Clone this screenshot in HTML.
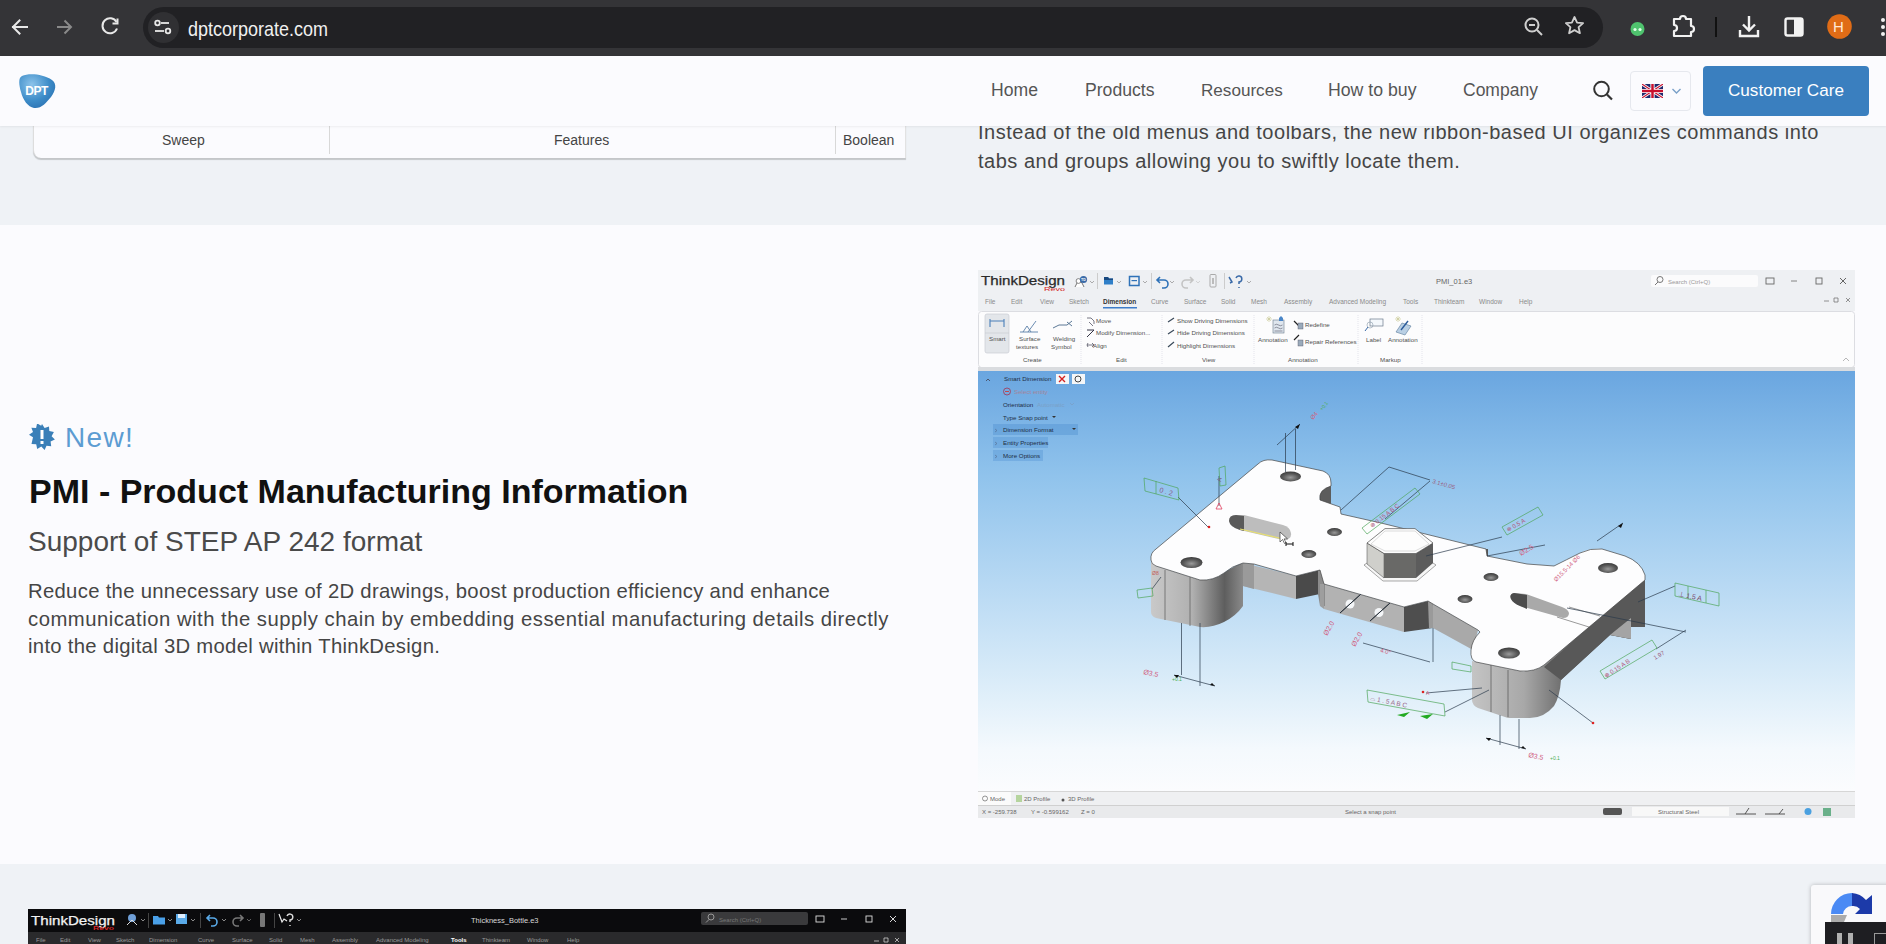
<!DOCTYPE html>
<html><head><meta charset="utf-8">
<style>
*{margin:0;padding:0;box-sizing:border-box}
html,body{width:1886px;height:944px;overflow:hidden;background:#fbfbfe;font-family:"Liberation Sans",sans-serif}
.a{position:absolute}
.t{position:absolute;white-space:nowrap;line-height:1}
</style></head><body>
<!-- Browser chrome -->
<div class="a" style="left:0;top:0;width:1886px;height:56px;background:#343437"></div>
<div class="a" style="left:143px;top:7px;width:1460px;height:41px;border-radius:21px;background:#212124"></div>
<div class="a" style="left:148px;top:12px;width:31px;height:31px;border-radius:50%;background:#303033"></div>
<svg class="a" style="left:0;top:0" width="1886" height="56">
<g fill="none" stroke="#e8e8e8" stroke-width="2" stroke-linecap="square">
<path d="M27 27H13M19.5 20.5L13 27l6.5 6.5"/>
</g>
<g fill="none" stroke="#8a8a8a" stroke-width="2">
<path d="M57 27h14M64.5 20.5L71 27l-6.5 6.5"/>
</g>
<g fill="none" stroke="#e8e8e8" stroke-width="2">
<path d="M116.5 22A7.5 7.5 0 1 0 117 28.5"/>
<path d="M117.5 18.5v5h-5" stroke-width="2"/>
</g>
<g fill="none" stroke="#e8e8e8" stroke-width="1.8">
<circle cx="157.5" cy="23" r="2.3"/><path d="M161 23h8"/>
<circle cx="168" cy="31" r="2.3"/><path d="M155 31h9"/>
</g>
<g fill="none" stroke="#cfcfcf" stroke-width="2">
<circle cx="1532" cy="25" r="6.5"/><path d="M1537 30l5 5"/><path d="M1529 25h6"/>
</g>
<path d="M1574.5 17l2.6 5.6 6 .6-4.5 4 1.3 6-5.4-3.1-5.4 3.1 1.3-6-4.5-4 6-.6z" fill="none" stroke="#cfcfcf" stroke-width="1.8" stroke-linejoin="round"/>
<circle cx="1637.5" cy="29" r="7" fill="#4fc36e"/>
<circle cx="1635" cy="29.5" r="1.6" fill="#e0ffe8"/><circle cx="1640" cy="29.5" r="1.6" fill="#e0ffe8"/>
<path d="M1674 19h6a3 3 0 0 1 6 0h5v7a3 3 0 0 1 0 6v4h-17v-5a3 3 0 0 0 0-6z" fill="none" stroke="#f2f2f2" stroke-width="2.2" stroke-linejoin="round"/>
<rect x="1715" y="17" width="2" height="20" fill="#111"/>
<g fill="none" stroke="#f2f2f2" stroke-width="2.4">
<path d="M1749 16v14M1743 24.5l6 6 6-6M1740 30v6h18v-6"/>
</g>
<rect x="1785.5" y="18.5" width="17" height="17" rx="2" fill="none" stroke="#f2f2f2" stroke-width="2.4"/>
<rect x="1794" y="18" width="9" height="18" fill="#f2f2f2"/>
<circle cx="1839.5" cy="26.5" r="12.3" fill="#e06c16"/>
<circle cx="1883" cy="20" r="2" fill="#f0f0f0"/><circle cx="1883" cy="27" r="2" fill="#f0f0f0"/><circle cx="1883" cy="34" r="2" fill="#f0f0f0"/>
</svg>
<div class="t" style="left:1833px;top:19px;font-size:15px;color:#ffe9d6">H</div>
<div class="t" style="left:188px;top:19px;font-size:18px;color:#f0f0f0;transform:scaleY(1.1);transform-origin:0 0">dptcorporate.com</div>

<!-- Header -->
<div class="a" style="left:0;top:56px;width:1886px;height:70px;background:#fbfbfe;z-index:5;box-shadow:0 1px 2px rgba(0,0,0,0.06)">
<svg class="a" style="left:17px;top:16px" width="40" height="38" viewBox="0 0 40 38">
<defs><radialGradient id="lg" cx="0.35" cy="0.3" r="0.8"><stop offset="0" stop-color="#8cc3ea"/><stop offset="0.6" stop-color="#3d8cc8"/><stop offset="1" stop-color="#2a6fb0"/></radialGradient></defs>
<path d="M5 4C12 1 26 2 35 8C40 12 39 18 34 25C29 31 24 37 17 36C11 35 6 28 4 20C2 13 1 6 5 4z" fill="url(#lg)"/>
<text x="19.5" y="23" font-family="Liberation Sans" font-weight="bold" font-size="12" fill="#fff" text-anchor="middle" letter-spacing="-0.5">DPT</text>
</svg>
<div class="t" style="left:991px;top:26px;font-size:17.6px;color:#555">Home</div>
<div class="t" style="left:1085px;top:26px;font-size:17.6px;color:#555">Products</div>
<div class="t" style="left:1201px;top:26px;font-size:17.1px;color:#555">Resources</div>
<div class="t" style="left:1328px;top:26px;font-size:17.7px;color:#555">How to buy</div>
<div class="t" style="left:1463px;top:26px;font-size:17.5px;color:#555">Company</div>
<svg class="a" style="left:1590px;top:22px" width="26" height="26"><circle cx="11.5" cy="11" r="7.3" fill="none" stroke="#333" stroke-width="2"/><path d="M17 16.5l5 5" stroke="#333" stroke-width="2.2"/></svg>
<div class="a" style="left:1630px;top:15px;width:61px;height:40px;border:1px solid #e6e8ee;border-radius:4px"></div>
<svg class="a" style="left:1642px;top:28px" width="21" height="14" viewBox="0 0 60 40">
<rect width="60" height="40" fill="#1f2a6e"/>
<path d="M0 0L60 40M60 0L0 40" stroke="#fff" stroke-width="8"/>
<path d="M0 0L60 40M60 0L0 40" stroke="#c8102e" stroke-width="3"/>
<path d="M30 0v40M0 20h60" stroke="#fff" stroke-width="12"/>
<path d="M30 0v40M0 20h60" stroke="#c8102e" stroke-width="7"/>
</svg>
<svg class="a" style="left:1671px;top:30px" width="12" height="10"><path d="M1.5 3l4 4 4-4" fill="none" stroke="#7aa0c8" stroke-width="1.4"/></svg>
<div class="a" style="left:1703px;top:10px;width:166px;height:50px;background:#3a7fbf;border-radius:4px"></div>
<div class="t" style="left:1728px;top:26px;font-size:17.1px;color:#fff">Customer Care</div>
</div>

<!-- top band -->
<div class="a" style="left:0;top:126px;width:1886px;height:99px;background:#eff2f6">
<div class="a" style="left:33px;top:-2px;width:873px;height:34px;background:#fbfbfe;border-radius:0 0 0 8px;box-shadow:0 2px 1px rgba(0,0,0,0.18);border-left:1px solid #ddd;border-right:1px solid #e2e2e2"></div>
<div class="a" style="left:329px;top:0;width:1px;height:28px;background:#d8d8d8"></div>
<div class="a" style="left:835px;top:0;width:1px;height:28px;background:#d8d8d8"></div>
<div class="t" style="left:162px;top:7px;font-size:14px;color:#444">Sweep</div>
<div class="t" style="left:554px;top:7px;font-size:14px;color:#444">Features</div>
<div class="t" style="left:843px;top:7px;font-size:14px;color:#444">Boolean</div>
<div class="t" style="left:978px;top:-4px;font-size:20px;color:#454545;letter-spacing:0.51px">Instead of the old menus and toolbars, the new ribbon-based UI organizes commands into</div>
<div class="t" style="left:978px;top:25px;font-size:20px;color:#454545;letter-spacing:0.51px">tabs and groups allowing you to swiftly locate them.</div>
</div>

<!-- PMI text -->
<svg class="a" style="left:29px;top:424px" width="26" height="26" viewBox="0 0 26 26">
<path d="M13 0l2.6 4 4.4-1.6.3 4.7 4.6 1-2.3 4.1 3.3 3.3-4.3 2 .6 4.7-4.7-.5-1.9 4.3-3.3-3.4-4.1 2.3-1-4.6-4.7-.3L4 13.3 0 10.7l4-2.6L2.4 3.7l4.7.3 1-4.6 4.1 2.3z" fill="#3a7fb8"/>
<rect x="11.5" y="6" width="3" height="9" fill="#fff"/><rect x="11.5" y="17" width="3" height="3" fill="#fff"/>
</svg>
<div class="t" style="left:65px;top:424px;font-size:28px;color:#5c9cd2;letter-spacing:1.3px">New!</div>
<div class="t" style="left:29px;top:474px;font-size:34px;color:#111;font-weight:bold;letter-spacing:0px">PMI - Product Manufacturing Information</div>
<div class="t" style="left:28px;top:528px;font-size:28px;color:#4a4a4a;letter-spacing:0px">Support of STEP AP 242 format</div>
<div class="t" style="left:28px;top:581px;font-size:20.3px;color:#454545;letter-spacing:0.3px">Reduce the unnecessary use of 2D drawings, boost production efficiency and enhance</div>
<div class="t" style="left:28px;top:608.5px;font-size:20.3px;color:#454545;letter-spacing:0.49px">communication with the supply chain by embedding essential manufacturing details directly</div>
<div class="t" style="left:28px;top:636px;font-size:20.3px;color:#454545;letter-spacing:0.3px">into the digital 3D model within ThinkDesign.</div>

<!-- CAD -->
<svg class="a" style="left:978px;top:270px" width="877" height="548" viewBox="978 270 877 548" font-family="Liberation Sans">
<defs>
<linearGradient id="vp" x1="0" y1="0" x2="0" y2="1">
<stop offset="0" stop-color="#6aa6e0"/><stop offset="0.25" stop-color="#90c3ec"/><stop offset="0.5" stop-color="#b6d8f3"/><stop offset="0.75" stop-color="#dcedf9"/><stop offset="0.9" stop-color="#f4f9fd"/><stop offset="1" stop-color="#fbfcfe"/>
</linearGradient>
<linearGradient id="wl" x1="0" y1="0" x2="1" y2="0">
<stop offset="0" stop-color="#c9c9c9"/><stop offset="0.45" stop-color="#b0b0b0"/><stop offset="0.8" stop-color="#5e5e5e"/><stop offset="1" stop-color="#8a8a8a"/>
</linearGradient>
<linearGradient id="wr" x1="0" y1="0" x2="1" y2="0">
<stop offset="0" stop-color="#c4c4c4"/><stop offset="0.3" stop-color="#a8a8a8"/><stop offset="0.6" stop-color="#5a5a5a"/><stop offset="1" stop-color="#6e6e6e"/>
</linearGradient>
<linearGradient id="wm" x1="0" y1="0" x2="1" y2="0">
<stop offset="0" stop-color="#c0c0c0"/><stop offset="1" stop-color="#a4a4a4"/>
</linearGradient>
<radialGradient id="hole" cx="0.5" cy="0.6" r="0.6"><stop offset="0" stop-color="#9a9a9a"/><stop offset="0.6" stop-color="#5a5a5a"/><stop offset="1" stop-color="#3a3a3a"/></radialGradient>
</defs>
<!-- title bar -->
<rect x="978" y="270" width="877" height="41" fill="#eef0f3"/>
<!-- ribbon -->
<rect x="978.5" y="311.5" width="876" height="56" rx="3" fill="#fcfcfd" stroke="#dcdde2"/>
<rect x="978" y="367" width="877" height="4" fill="#dadcdf"/>
<!-- viewport -->
<rect x="978" y="371" width="877" height="420" fill="url(#vp)"/>
<!-- bottom bars -->
<rect x="978" y="791" width="877" height="14" fill="#eff0f2"/>
<rect x="978" y="791" width="877" height="1" fill="#d6d6d6"/>
<rect x="978" y="792" width="33" height="13" fill="#fbfbfb"/>
<rect x="978" y="805" width="877" height="13" fill="#e9eaec"/>
<rect x="978" y="805" width="877" height="1" fill="#d0d0d0"/>
<!--RIBBON--><g font-family="Liberation Sans">
<!-- logo -->
<text x="981" y="285" font-size="12.5" fill="#2a2a2a" textLength="84" lengthAdjust="spacingAndGlyphs" stroke="#2a2a2a" stroke-width="0.25">ThinkDesign</text>
<text x="1044" y="291" font-size="6" fill="#d42424" textLength="21" lengthAdjust="spacingAndGlyphs">Revo</text>
<!-- quick access -->
<path d="M1075,287 l2,-4 a3,3 0 0 1 5,0 l2,4" stroke="#555" fill="#fff" stroke-width="0.8"/><circle cx="1078.5" cy="281" r="2.4" fill="#fff" stroke="#555" stroke-width="0.7"/><circle cx="1083.5" cy="279.5" r="3.6" fill="#3a6aa8"/><text x="1081" y="281.3" font-size="3.6" fill="#fff" font-weight="bold">TD</text>
<path d="M1090,281 l2,2 l2,-2" stroke="#999" fill="none" stroke-width="0.8"/>
<rect x="1097" y="273" width="1" height="16" fill="#ccc"/>
<path d="M1104,277 h4 l1,1.5 h4 v6 h-9 z" fill="#2f7fc8"/><path d="M1104,277 h4 l1,1.5 h4 v1.5 h-9z" fill="#1a4a80"/>
<path d="M1117,281 l2,2 l2,-2" stroke="#999" fill="none" stroke-width="0.8"/>
<rect x="1129.5" y="276.5" width="9.5" height="9" fill="none" stroke="#2f72b8" stroke-width="1.5"/><rect x="1131.5" y="280" width="5.5" height="1.2" fill="#2f72b8"/>
<path d="M1143,281 l2,2 l2,-2" stroke="#999" fill="none" stroke-width="0.8"/>
<rect x="1151" y="273" width="1" height="16" fill="#ccc"/>
<path d="M1160,277 l-3,3 l3,3 M1157,280 h7 a4,4 0 0 1 0,8 h-2" stroke="#2f72b8" fill="none" stroke-width="1.6"/>
<path d="M1170,281 l2,2 l2,-2" stroke="#999" fill="none" stroke-width="0.8"/>
<path d="M1190,277 l3,3 l-3,3 M1193,280 h-7 a4,4 0 0 0 0,8 h2" stroke="#c4c4c4" fill="none" stroke-width="1.6"/>
<path d="M1196,281 l2,2 l2,-2" stroke="#ccc" fill="none" stroke-width="0.8"/>
<rect x="1210" y="274.5" width="6" height="12.5" rx="1" fill="none" stroke="#aaa" stroke-width="1"/><rect x="1212" y="278" width="2" height="6" fill="#bbb"/>
<rect x="1224" y="273" width="1" height="16" fill="#ccc"/>
<path d="M1229,277 l3,5 l-2,1 M1236,278 a3,3 0 1 1 3,4 v2 M1239,287 v1" stroke="#3a6aa8" fill="none" stroke-width="1.5"/>
<path d="M1247,281 l2,2 l2,-2" stroke="#999" fill="none" stroke-width="0.8"/>
<!-- title -->
<text x="1436" y="284" font-size="7.5" fill="#666">PMI_01.e3</text>
<rect x="1651" y="275" width="107" height="12" rx="2" fill="#fbfbfc"/>
<circle cx="1660" cy="279.5" r="3" fill="none" stroke="#777" stroke-width="1"/><path d="M1658,282 l-3,3" stroke="#777" stroke-width="1"/>
<text x="1668" y="284" font-size="6" fill="#9a9a9a">Search (Ctrl+Q)</text>
<rect x="1766" y="278" width="8" height="6" fill="none" stroke="#666" stroke-width="0.9"/>
<path d="M1791,281 h6" stroke="#777" stroke-width="0.9"/>
<rect x="1816" y="278" width="6" height="6" fill="none" stroke="#666" stroke-width="0.9"/>
<path d="M1840,278 l6,6 M1846,278 l-6,6" stroke="#555" stroke-width="0.9"/>
<!-- tabs row -->
<g font-size="6.5" fill="#8a8a8a">
<text x="985" y="304">File</text><text x="1011" y="304">Edit</text><text x="1040" y="304">View</text><text x="1069" y="304">Sketch</text>
<text x="1103" y="304" fill="#333" font-weight="bold">Dimension</text>
<text x="1151" y="304">Curve</text><text x="1184" y="304">Surface</text><text x="1221" y="304">Solid</text><text x="1251" y="304">Mesh</text>
<text x="1284" y="304">Assembly</text><text x="1329" y="304">Advanced Modeling</text><text x="1403" y="304">Tools</text>
<text x="1434" y="304">Thinkteam</text><text x="1479" y="304">Window</text><text x="1519" y="304">Help</text>
</g>
<rect x="1103" y="307" width="34" height="1.5" fill="#3d7cc9"/>
<path d="M1824,301 h5 M1834,298 h4 v4 h-4z M1846,298 l4,4 M1850,298 l-4,4" stroke="#777" stroke-width="0.8" fill="none"/>
<!-- ribbon groups -->
<g stroke="#e4e4ec" stroke-width="1" stroke-dasharray="1 1"><path d="M1081,315 V364 M1162,315 V364 M1254,315 V364 M1358,315 V364 M1422,315 V364"/></g>
<rect x="985" y="314" width="24" height="39" rx="2" fill="#e3e6ea" stroke="#c8ccd2" stroke-width="0.7"/>
<path d="M985,333 h24" stroke="#c8ccd2" stroke-width="0.7"/>
<path d="M990,319 v8 M1004,319 v8 M990,321 h14" stroke="#4a7fb8" stroke-width="1.1" fill="none"/>
<g font-size="6.2" fill="#505050">
<text x="989" y="341">Smart</text>
<text x="1019" y="341">Surface</text><text x="1016" y="349">textures</text>
<text x="1053" y="341">Welding</text><text x="1051" y="349">Symbol</text>
<text x="1023" y="362">Create</text><text x="1116" y="362">Edit</text><text x="1202" y="362">View</text>
<text x="1288" y="362">Annotation</text><text x="1380" y="362">Markup</text>
<text x="1096" y="323">Move</text><text x="1096" y="335">Modify  Dimension...</text><text x="1093" y="348">Align</text>
<text x="1177" y="323">Show Driving Dimensions</text><text x="1177" y="335">Hide Driving Dimensions</text><text x="1177" y="348">Highlight Dimensions</text>
<text x="1258" y="342">Annotation</text><text x="1305" y="327">Redefine</text><text x="1305" y="344">Repair References</text>
<text x="1366" y="342">Label</text><text x="1388" y="342">Annotation</text>
</g>
<path d="M1020,332 h18 M1023,332 l4,-6 l4,6 M1028,332 l8,-11" stroke="#5a7fa8" stroke-width="0.9" fill="none"/>
<path d="M1053,328 l6,-3 h8 l5,-4 M1067,322 l5,4" stroke="#4a6a8a" stroke-width="0.9" fill="none"/>
<path d="M1087,318 h4 l3,3 v3 M1089,322 l4,4" stroke="#556" stroke-width="0.8" fill="none"/><path d="M1087,337 l7,-7 M1087,330 h7" stroke="#334" stroke-width="1" fill="none"/><path d="M1087,345 h7 M1092,343 l2,2 l-2,2 M1088,343 l-1,2 l1,2" stroke="#556" stroke-width="0.8" fill="none"/>
<path d="M1168,322 l6,-4 M1168,334 l6,-4 M1168,347 l6,-5" stroke="#3a4a5a" stroke-width="1.2" fill="none"/>
<path d="M1267,317 l4,4 M1271,317 l-4,4 M1269,316 v6 M1266,319 h6" stroke="#c8c890" stroke-width="0.6"/>
<rect x="1273" y="320" width="11" height="13" fill="#dfe6ee" stroke="#6a7a8a" stroke-width="0.6"/>
<path d="M1274.5,325 q2,-1.5 4,0 t4,0 M1274.5,328 q2,-1.5 4,0 t4,0 M1274.5,331 h8" stroke="#556" stroke-width="0.6" fill="none"/>
<path d="M1279,318 l2,-2 l2,2 v3 h-4z" fill="#4a86c8"/>
<path d="M1294,321 l5,5 M1294,340 l-0,0 l5,-5" stroke="#222" stroke-width="1.2"/>
<rect x="1298" y="323" width="5" height="6" fill="#9aaabb" stroke="#556" stroke-width="0.4"/>
<rect x="1298" y="340" width="5" height="6" fill="#9aaabb" stroke="#556" stroke-width="0.4"/>
<rect x="1370" y="319" width="13" height="7" fill="#f4f8fc" stroke="#6a7a8a" stroke-width="0.7"/>
<circle cx="1370" cy="325" r="3" fill="none" stroke="#8a9aaa" stroke-width="0.6"/><path d="M1368,327 l-3,4" stroke="#3a6aa8" stroke-width="1"/>
<path d="M1396,317 l4,4 M1400,317 l-4,4 M1398,316 v6 M1395,319 h6" stroke="#c8c890" stroke-width="0.6"/>
<path d="M1396,332 l6,-9 l9,3 l-6,9 z" fill="#b9cfe4" stroke="#5a7a9a" stroke-width="0.6"/>
<path d="M1401,330 l7,-9" stroke="#2a5a9a" stroke-width="1.4"/>
<path d="M1843,361 l3,-3 l3,3" stroke="#999" fill="none" stroke-width="0.7"/>
<!-- viewport panel -->
<g font-size="6.2" fill="#1e2e44">
<path d="M986,381 l2,-2 l2,2" stroke="#445" fill="none" stroke-width="0.8"/><path d="M995,429 l2,1.5 l-2,1.5 M995,442 l2,1.5 l-2,1.5 M995,455 l2,1.5 l-2,1.5" stroke="#556" fill="none" stroke-width="0.6"/>
<text x="1004" y="381">Smart Dimension</text>
<rect x="1056" y="374" width="13" height="10" fill="#f4f6f8"/><path d="M1059,376 l6,6 M1065,376 l-6,6" stroke="#d42020" stroke-width="1.4"/>
<rect x="1072" y="374" width="13" height="10" fill="#f4f6f8"/><circle cx="1078" cy="379" r="3" fill="none" stroke="#333" stroke-width="0.9"/>
<circle cx="1007" cy="391.5" r="3.5" fill="none" stroke="#a04060" stroke-width="0.9"/><path d="M1005,391.5 h4" stroke="#d03a3a" stroke-width="0.9"/>
<text x="1014" y="394" fill="#c46a6a" opacity="0.6">Select entity</text>
<text x="1003" y="406.5">Orientation</text><text x="1037" y="406.5" fill="#7aa0c8">Automatic</text>
<path d="M1070,403 l2,2 l2,-2" stroke="#7aa0c8" fill="none" stroke-width="0.8"/>
<text x="1003" y="419.5">Type Snap point</text><path d="M1052,416 h4 l-2,2z" fill="#333"/>
<rect x="993" y="424" width="85" height="11" fill="#4d8fd0" opacity="0.4"/>
<text x="1003" y="432">Dimension Format</text><path d="M1072,428 h4 l-2,2z" fill="#333"/>
<rect x="993" y="437" width="55" height="11" fill="#4d8fd0" opacity="0.35"/>
<text x="1003" y="445">Entity Properties</text>
<rect x="993" y="450" width="50" height="11" fill="#4d8fd0" opacity="0.35"/>
<text x="1003" y="458">More Options</text>
</g>
<!-- status bars -->
<g font-size="6" fill="#666">
<circle cx="985" cy="798.5" r="2.5" fill="none" stroke="#777" stroke-width="0.8"/>
<text x="990" y="801">Mode</text>
<rect x="1016" y="795" width="6" height="7" fill="#9cc87a" opacity="0.7"/>
<text x="1024" y="801">2D Profile</text>
<circle cx="1063" cy="800" r="1.5" fill="#555"/>
<text x="1068" y="801">3D Profile</text>
<text x="982" y="814">X = -259.738</text><text x="1031" y="814">Y = -0.599162</text><text x="1081" y="814">Z = 0</text>
<text x="1345" y="814">Select a snap point</text>
<rect x="1603" y="808" width="19" height="7" rx="2" fill="#555"/>
<rect x="1632" y="807" width="97" height="9" fill="#f8f8f8"/>
<text x="1658" y="814">Structural Steel</text>
<path d="M1736,814 h20 M1745,814 l4,-6 M1765,814 h20 M1779,814 l4,-5" stroke="#444" stroke-width="0.9"/>
<circle cx="1808" cy="811.5" r="3.5" fill="#4aa0e0"/>
<rect x="1823" y="808" width="8" height="8" fill="#6ab08a"/>
</g>
</g>
<!--/RIBBON-->
<!--PART--><g stroke-linejoin="round">
<!-- tab notch wall -->
<path d="M1319,486 L1331,482 L1331,508 L1320,504 Z" fill="#5c5c5c"/>
<path d="M1486,549 L1488,549 L1488,560 L1486,558 Z" fill="#555"/>
<!-- center front wall -->
<path d="M1324,584 L1404,607 L1404,632 L1324,609 Z" fill="#b2b2b2"/>
<ellipse cx="1350" cy="604" rx="4.5" ry="4.5" fill="#f4f6f8"/>
<ellipse cx="1379" cy="612.5" rx="4.5" ry="4.5" fill="#f4f6f8"/>
<path d="M1340,613 L1361,594 M1370,621 L1390,603" stroke="#222" stroke-width="1"/>
<!-- dark notch wall -->
<path d="M1404,607 L1428,601 Q1433,601 1433,606 L1433,628 L1404,632 Z" fill="#4e4e4e"/>
<path d="M1428,601 Q1433,601 1433,606 L1433,628 L1429,628 Z" fill="#9a9a9a"/>
<!-- wall after notch -->
<path d="M1433,604 L1478,630 L1473,650 L1433,628 Z" fill="#a9a9a9"/>
<!-- center-left wall -->
<path d="M1243,563 L1296,576 L1296,599 L1243,586 Z" fill="#b5b5b5"/>
<path d="M1243,563 L1254,564 L1254,589 L1243,586 Z" fill="#9a9a9a"/>
<!-- dark notch center-left -->
<path d="M1296,576 L1320,570 L1320,594 L1296,599 Z" fill="#4a4a4a"/>
<path d="M1318,570 Q1325,570 1325,578 L1325,606 L1320,606 L1318,594 Z" fill="#8c8c8c"/>
<path d="M1320,584 L1324,584 L1324,609 L1320,606 Z" fill="#9e9e9e"/>
<!-- left leg -->
<path d="M1151,562 L1156,566 L1200,580 Q1213,581 1224,573 Q1234,566 1243,563 L1243,606 Q1236,616 1224,622 Q1212,628 1200,627 L1156,618 Q1151,616 1151,612 Z" fill="url(#wl)"/>
<path d="M1165,570 V620 M1190,577 V626" stroke="#666" stroke-width="0.8"/>
<!-- right leg + wing -->
<path d="M1645,578 L1645,627 L1631,627 L1631,639 L1610,635 L1561,680 Q1560,696 1554,706 Q1544,718 1530,718 L1508,718 L1478,708 Q1472,705 1472,700 L1472,661 L1520,671 Q1535,672 1544,665 Z" fill="url(#wr)"/>
<path d="M1645,578 L1645,627 L1631,627 L1631,639 L1610,635 L1561,680 L1544,667 Z" fill="#585858"/>
<path d="M1610,635 L1631,618 L1631,639 Z" fill="#a4a4a4"/>
<path d="M1491,665 V712 M1508,670 V717" stroke="#555" stroke-width="0.7"/>
<!-- top face -->
<path d="M1151,560 Q1150,553 1156,549 L1258,464 Q1263,459 1272,460 L1323,471 Q1331,474 1331,483 L1331,486 Q1318,490 1320,500 L1340,507 L1341,514 L1381,523 L1486,549 L1487,556 L1527,564 L1554,566 Q1566,560 1580,553 Q1590,548 1602,549 L1625,556 Q1641,562 1645,575 L1645,580 L1544,665 Q1535,672 1520,671 L1476,662 Q1470,660 1471,650 Q1472,640 1480,632 L1478,630 L1433,604 L1428,601 L1404,607 L1324,584 L1320,570 L1296,576 L1254,564 L1243,563 Q1232,566 1224,573 Q1213,581 1200,580 L1156,566 Q1151,564 1151,560 Z" fill="#fdfdfe" stroke="#444" stroke-width="0.7"/>
<!-- holes -->
<ellipse cx="1290.5" cy="476.5" rx="10.5" ry="5" fill="url(#hole)"/>
<ellipse cx="1191.5" cy="562.5" rx="11" ry="5.5" fill="url(#hole)"/>
<ellipse cx="1334.5" cy="532" rx="7.5" ry="4" fill="url(#hole)"/>
<ellipse cx="1308.8" cy="554" rx="7.5" ry="4" fill="url(#hole)"/>
<ellipse cx="1491" cy="577" rx="7.5" ry="4" fill="url(#hole)"/>
<ellipse cx="1465" cy="599" rx="7.5" ry="4" fill="url(#hole)"/>
<ellipse cx="1509" cy="653" rx="11" ry="5.5" fill="url(#hole)"/>
<ellipse cx="1608" cy="568" rx="10" ry="5" fill="url(#hole)"/>
<!-- left slot -->
<path d="M1236,515 Q1229,515 1229,521 Q1230,527 1240,530 L1283,540 Q1292,540 1291,533 Q1290,527 1283,525 L1244,515 Z" fill="#bdbdbd"/>
<path d="M1236,515 Q1229,515 1229,521 Q1230,527 1240,530 L1244,531 L1244,516 Z" fill="#5a5a5a"/>
<path d="M1240,529 L1283,539" stroke="#e8e070" stroke-width="1.2"/>
<!-- right slot -->
<path d="M1514,593 Q1509,594 1511,599 Q1513,603 1520,606 L1563,618 Q1569,618 1569,613 Q1568,609 1562,607 L1526,594 Z" fill="#a9a9a9"/>
<path d="M1514,593 Q1509,594 1511,599 Q1513,603 1520,606 L1527,609 L1527,595 Z" fill="#4c4c4c"/>
<path d="M1569,607 L1600,616 M1557,617 L1589,627" stroke="#555" stroke-width="0.6"/>
<!-- hex nut -->
<path d="M1364,565 L1383,581 L1417,581 L1436,565 L1433,563 L1367,563 Z" fill="#f6f6f6" stroke="#555" stroke-width="0.5"/>
<path d="M1367,543 L1384,553.5 L1384,578 L1367,564 Z" fill="#cfcfcb" stroke="#444" stroke-width="0.5"/>
<path d="M1384,553.5 L1416,553.5 L1416,578 L1384,578 Z" fill="#696967"/>
<path d="M1416,553.5 L1433,543 L1433,563 L1416,578 Z" fill="#5c5c5c"/>
<path d="M1367,543 L1385,528.6 L1415,528.6 L1433,543 L1416,553.5 L1384,553.5 Z" fill="#fdfdfd" stroke="#333" stroke-width="0.6"/>
<path d="M1371,544 L1385,531 L1415,531 L1429,544 L1415,551 L1385,551 Z" fill="none" stroke="#bbb" stroke-width="0.5"/>
</g>
<!-- annotations -->
<g fill="none" stroke="#2a3a4a" stroke-width="0.7">
<path d="M1285.5,433 V472 M1295.5,429 V470"/>
<path d="M1277,445 L1300,424"/>
<path d="M1178,497 L1209,528"/>
<path d="M1219,476 V506"/>
<path d="M1341,510 L1389,467 L1430,480 M1385,519 L1430,481"/>
<path d="M1426,556 L1502,537"/>
<path d="M1487,556 L1545,545"/>
<path d="M1597,541 L1623,523"/>
<path d="M1638,602 L1675,586"/>
<path d="M1567,608 L1686,632 M1656,649 L1686,630"/>
<path d="M1549,690 L1593,723"/>
<path d="M1500,715 V745 M1519,719 V749 M1486,738 L1526,749"/>
<path d="M1181.5,623 V675 M1200,623 V686 M1174,675 L1215,686"/>
<path d="M1363,643 L1430,662 M1433,628 V662"/>
<path d="M1445,712 L1489,690 M1426,693 L1482,688"/>
<path d="M1152,589 L1161,577"/>
<path d="M1340,613 L1361,594 M1370,621 L1390,603"/>
</g>
<g fill="none" stroke="#4fa65a" stroke-width="0.7">
<path d="M1144,478 L1178,488 L1179,500 L1145,491 Z M1156,481 V494"/>
<path d="M1219,468 L1225,466 L1226,485 L1220,486 Z"/>
<path d="M1362,528 L1415,488 L1420,494 L1367,534 Z"/>
<path d="M1502,527 L1538,507 L1543,515 L1507,535 Z"/>
<path d="M1675,583 L1719,593 L1719,606 L1675,596 Z M1688,586 V599 M1706,590 V603"/>
<path d="M1600,671 L1652,640 L1657,648 L1605,679 Z"/>
<path d="M1367,690 L1444,704 L1445,716 L1368,702 Z"/>
<path d="M1452,662 L1471,666 L1471,672 L1452,669 Z"/>
<path d="M1137,590 L1152,588 L1153,596 L1138,598 Z"/>
</g>
<g font-size="7" fill="#8a5a8a">
<text x="1159" y="492" transform="rotate(16 1159 492)">0 . 2</text>
<text x="1221" y="482" font-size="6" fill="#7a5a7a" transform="rotate(-80 1221 482)">A</text>
<text x="1678" y="596" font-size="7" fill="#7a4a6a" transform="rotate(12 1678 596)">⊥  1.5  A</text>
<text x="1372" y="528" font-size="6" fill="#b05a7a" transform="rotate(-38 1372 528)">⊕ 0.15 A B C</text>
<text x="1508" y="532" font-size="6" fill="#b05a7a" transform="rotate(-30 1508 532)">⊕ 0.5 A</text>
<text x="1606" y="678" font-size="6" fill="#b05a7a" transform="rotate(-33 1606 678)">⊕ 0.15 A B</text>
<text x="1370" y="700" font-size="6.5" fill="#9a6a8a" transform="rotate(12 1370 700)">⌓ 1 . 5 A B C</text>
<text x="1432" y="483" font-size="6" fill="#9a5a7a" transform="rotate(16 1432 483)">3.1±0.05</text>
<text x="1655" y="660" font-size="6" fill="#9a5a7a" transform="rotate(-30 1655 660)">1.97</text>
</g>
<path d="M1216,509 L1219,503 L1222,509 Z" fill="none" stroke="#e04060" stroke-width="0.8"/>
<g font-size="7" fill="#d06080">
<text x="1313" y="420" font-size="6" transform="rotate(-50 1313 420)">Ø4</text>
<text x="1556" y="582" font-size="6" transform="rotate(-45 1556 582)">Ø15.5-14 Ø6</text>
<text x="1143" y="674" transform="rotate(12 1143 674)">Ø3.5</text>
<text x="1528" y="757" transform="rotate(12 1528 757)">Ø3.5</text>
<text x="1327" y="636" transform="rotate(-60 1327 636)">Ø2.0</text>
<text x="1355" y="647" transform="rotate(-60 1355 647)">Ø2.0</text>
<text x="1521" y="556" transform="rotate(-30 1521 556)">Ø2.5</text>
<text x="1380" y="652" font-size="6" transform="rotate(15 1380 652)">4.0°</text>
<text x="1426" y="695" font-size="5">A</text>
</g>
<g font-size="5" fill="#4caf50"><text x="1322" y="411" transform="rotate(-50 1322 411)">+0.1</text><text x="1172" y="681">+0.1</text><text x="1550" y="760">+0.1</text><text x="1152" y="575" fill="#c05a5a">Ø8</text></g>
<path d="M1397,715 L1410,712 L1404,717 Z M1420,716 L1433,714 L1427,719Z" fill="#22aa22"/>
<path d="M1174,675 l5,0 l-2,3z M1215,686 l-5,-1 l2,-2z M1486,738 l5,0 l-2,3z M1526,749 l-5,-1 l2,-2z M1300,424 l-2,5 l-3,-2z M1623,523 l-2,5 l-3,-2z" fill="#111"/>
<path d="M1280,532 v10 l2.5,-2.5 l2,4 l1.5,-0.8 l-2,-3.8 h3.5 z" fill="#fff" stroke="#222" stroke-width="0.6"/><path d="M1286,542 v4 M1293,542 v4 M1286,544 h7" stroke="#111" stroke-width="1"/><circle cx="1209" cy="527" r="1.3" fill="#d22"/>
<circle cx="1593" cy="723" r="1.3" fill="#d22"/>
<circle cx="1423" cy="692" r="1.3" fill="#d22"/>

<!--/PART-->
</svg>


<!-- bottom band -->
<div class="a" style="left:0;top:864px;width:1886px;height:80px;background:#eff2f6"></div>
<svg class="a" style="left:28px;top:909px" width="878" height="35" viewBox="28 909 878 35" font-family="Liberation Sans">
<rect x="28" y="909" width="878" height="23" fill="#0b0b0d"/>
<rect x="28" y="932" width="878" height="12" fill="#2a2a2c"/>
<text x="31" y="924.5" font-size="12.5" fill="#f2f2f2" textLength="84" lengthAdjust="spacingAndGlyphs" stroke="#f2f2f2" stroke-width="0.25">ThinkDesign</text>
<text x="93" y="930" font-size="5.5" fill="#d42424" textLength="21" lengthAdjust="spacingAndGlyphs" font-weight="bold">Revo</text>
<circle cx="132" cy="918" r="4" fill="#6f9fd8"/><path d="M127,925 l5,-5 l5,5" stroke="#ddd" fill="none" stroke-width="1"/>
<path d="M141,919 l2,2 l2,-2" stroke="#aaa" fill="none" stroke-width="0.8"/>
<rect x="148" y="913" width="1" height="15" fill="#444"/>
<path d="M153,916 h5 l1,1.5 h6 v7 h-12 z" fill="#4aa0e8"/>
<path d="M168,919 l2,2 l2,-2" stroke="#aaa" fill="none" stroke-width="0.8"/>
<rect x="176" y="914" width="11" height="10" fill="#5aaae8"/><rect x="178" y="914" width="7" height="4" fill="#dfefff"/>
<path d="M191,919 l2,2 l2,-2" stroke="#aaa" fill="none" stroke-width="0.8"/>
<rect x="200" y="913" width="1" height="15" fill="#444"/>
<path d="M210,915 l-3,3 l3,3 M207,918 h6 a4,4 0 0 1 0,8 h-2" stroke="#5aaae8" fill="none" stroke-width="1.6"/>
<path d="M222,919 l2,2 l2,-2" stroke="#aaa" fill="none" stroke-width="0.8"/>
<path d="M240,915 l3,3 l-3,3 M243,918 h-6 a4,4 0 0 0 0,8 h2" stroke="#777" fill="none" stroke-width="1.6"/>
<path d="M247,919 l2,2 l2,-2" stroke="#777" fill="none" stroke-width="0.8"/>
<rect x="260" y="913" width="5" height="14" rx="1" fill="#777"/>
<rect x="274" y="913" width="1" height="15" fill="#444"/>
<path d="M279,914 l3,8 l2,-3 l3,2" stroke="#eee" fill="none" stroke-width="1.2"/>
<path d="M287,916 a3,3 0 1 1 3,4 v2 M290,925 v1" stroke="#ddd" fill="none" stroke-width="1.4"/>
<path d="M297,919 l2,2 l2,-2" stroke="#aaa" fill="none" stroke-width="0.8"/>
<text x="471" y="923" font-size="7.5" fill="#d8d8d8">Thickness_Bottle.e3</text>
<rect x="701" y="912" width="107" height="13" rx="2" fill="#3a3a3c"/>
<circle cx="711" cy="917" r="3" fill="none" stroke="#999" stroke-width="1"/><path d="M709,919.5 l-3,3" stroke="#999" stroke-width="1"/>
<text x="719" y="922" font-size="6" fill="#777">Search (Ctrl+Q)</text>
<rect x="816" y="916" width="8" height="6" fill="none" stroke="#ddd" stroke-width="0.9"/>
<path d="M841,919 h6" stroke="#ddd" stroke-width="0.9"/>
<rect x="866" y="916" width="6" height="6" fill="none" stroke="#ddd" stroke-width="0.9"/>
<path d="M890,916 l6,6 M896,916 l-6,6" stroke="#eee" stroke-width="0.9"/>
<g font-size="6" fill="#9a9a9a">
<text x="36" y="942">File</text><text x="60" y="942">Edit</text><text x="88" y="942">View</text><text x="116" y="942">Sketch</text><text x="149" y="942">Dimension</text>
<text x="198" y="942">Curve</text><text x="232" y="942">Surface</text><text x="269" y="942">Solid</text><text x="300" y="942">Mesh</text><text x="332" y="942">Assembly</text>
<text x="376" y="942">Advanced Modeling</text><text x="451" y="942" fill="#fff" font-weight="bold">Tools</text><text x="482" y="942">Thinkteam</text><text x="527" y="942">Window</text><text x="567" y="942">Help</text>
</g>
<path d="M874,941 h5 M884,938 h4 v4 h-4z M895,938 l4,4 M899,938 l-4,4" stroke="#ccc" stroke-width="0.8" fill="none"/>
</svg>
<!-- recaptcha -->
<div class="a" style="left:1811px;top:885px;width:80px;height:70px;background:#f9f9fb;border-radius:3px;box-shadow:0 0 4px rgba(0,0,0,0.25)"></div>
<svg class="a" style="left:1826px;top:888px" width="60" height="56" viewBox="1826 888 60 56">
<path d="M1831,914 A21,21 0 0 1 1852,893 L1852,906 A9,9 0 0 0 1843,914 Z" fill="#4a8af4"/>
<path d="M1852,893 A21,21 0 0 1 1866,900 L1872,895 L1872,914 L1855,914 L1860,909 A9,9 0 0 0 1852,906 Z" fill="#1c3aa9"/>
<path d="M1831,915 h16 l-3,7 h-13z" fill="#ababab"/>
</svg>
<div class="a" style="left:1825px;top:922px;width:61px;height:22px;background:#1e1e22"></div>
<div class="a" style="left:1837px;top:933px;width:5px;height:11px;background:#b0b0b0"></div>
<div class="a" style="left:1848px;top:933px;width:5px;height:11px;background:#b0b0b0"></div>
<div class="a" style="left:1874px;top:933px;width:12px;height:11px;border:1px solid #999;border-right:none;border-bottom:none"></div>
</body></html>
